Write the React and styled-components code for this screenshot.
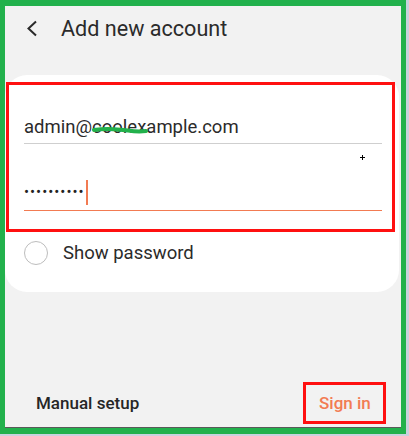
import React from 'react';
import styled, { createGlobalStyle } from 'styled-components';

const GlobalStyle = createGlobalStyle`
  body {
    margin: 0;
    background: #c9d2de;
    font-family: Roboto, "Liberation Sans", sans-serif;
  }
`;

const Frame = styled.div`
  width: 406px;
  height: 434px;
  box-sizing: border-box;
  border: solid #22b14c;
  border-width: 6px 5px 6px 5px;
`;

const Screen = styled.div`
  height: 100%;
  box-sizing: border-box;
  display: flex;
  flex-direction: column;
  background: #f2f2f2;
  border-bottom: 1px solid #5a5a5a;
`;

const Header = styled.div`
  height: 69px;
  box-sizing: border-box;
  display: flex;
  align-items: center;
  gap: 23px;
  padding: 0 0 24px 21px;
`;

const Title = styled.h1`
  margin: 0;
  font-size: 21.6px;
  line-height: 26px;
  font-weight: 400;
  color: #2b2b2b;
`;

const Card = styled.div`
  height: 217px;
  margin-right: 2px;
  background: #fff;
  border-radius: 22px;
  display: flex;
  flex-direction: column;
`;

const Highlight = styled.div`
  position: relative;
  margin: 7px 4px 0 1px;
  border: 3px solid #ff1010;
  padding: 0 10px 18px 15px;
`;

const Field = styled.div`
  position: relative;
  display: flex;
  align-items: center;
  padding: ${p => p.$pad};
  border-bottom: 1.5px solid ${p => (p.$active ? '#f27b52' : '#cfcfcf')};
  font-size: 18.5px;
  line-height: 24px;
  color: #2b2b2b;
`;

const Dots = styled.span`
  font-size: 15px;
  letter-spacing: 1px;
  line-height: 25px;
  color: #222;
`;

const Cursor = styled.span`
  width: 2px;
  height: 25px;
  margin-left: 1px;
  background: #f27b52;
`;

const Scribble = styled.svg`
  position: absolute;
  left: 68px;
  top: 41px;
`;

const Pointer = styled.svg`
  position: absolute;
  left: 351px;
  top: 70px;
`;

const OptionRow = styled.label`
  display: flex;
  align-items: center;
  gap: 15px;
  padding: 9px 0 0 19px;
  font-size: 18.5px;
  line-height: 24px;
  color: #2b2b2b;
`;

const Radio = styled.span`
  width: 24px;
  height: 24px;
  box-sizing: border-box;
  border: 1.5px solid #bdbdbd;
  border-radius: 50%;
`;

const Footer = styled.div`
  margin-top: auto;
  display: flex;
  justify-content: space-between;
  align-items: center;
  padding: 0 15px 3px 31px;
`;

const TextButton = styled.button`
  border: ${p => (p.$boxed ? '3px solid #ff1010' : 'none')};
  background: none;
  font-family: inherit;
  font-size: 17px;
  font-weight: 500;
  line-height: 22px;
  color: ${p => (p.$accent ? '#f27b52' : '#262626')};
  padding: ${p => (p.$boxed ? '0 0 0 13px' : '0')};
  width: ${p => (p.$boxed ? '83px' : 'auto')};
  height: ${p => (p.$boxed ? '42px' : 'auto')};
  text-align: left;
  box-sizing: border-box;
`;

const App = () => (
  <>
    <GlobalStyle />
    <Frame>
      <Screen>
        <Header>
          <svg width="12" height="17" viewBox="0 0 12 17">
            <path d="M10 1.5 L2.5 8.5 L10 15.5" fill="none" stroke="#2a2a2a" strokeWidth="2" />
          </svg>
          <Title>Add new account</Title>
        </Header>
        <Card>
          <Highlight>
            <Field $pad="30px 0 4px 0">
              admin@coolexample.com
              <Scribble width="56" height="8" viewBox="0 0 56 8">
                <path d="M2 4 C 14 2, 26 3, 36 4.5 S 50 5.5, 54 5" fill="none" stroke="#22b14c" strokeWidth="4" strokeLinecap="round" />
              </Scribble>
            </Field>
            <Field $pad="36px 0 5px 0" $active>
              <Dots>••••••••••</Dots>
              <Cursor />
            </Field>
            <Pointer width="5" height="5" viewBox="0 0 5 5">
              <path d="M2.5 0 V5 M0 2.5 H5" stroke="#000" strokeWidth="1" />
            </Pointer>
          </Highlight>
          <OptionRow>
            <Radio />
            Show password
          </OptionRow>
        </Card>
        <Footer>
          <TextButton>Manual setup</TextButton>
          <TextButton $boxed $accent>Sign in</TextButton>
        </Footer>
      </Screen>
    </Frame>
  </>
);

export default App;
